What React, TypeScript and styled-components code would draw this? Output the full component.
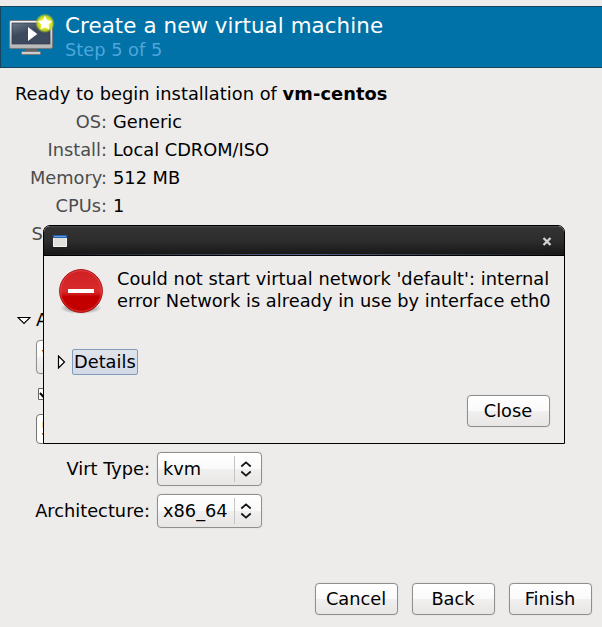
import React from 'react';
import styled, { createGlobalStyle } from 'styled-components';

const GlobalStyle = createGlobalStyle`
  * { box-sizing: border-box; }
  body { margin: 0; background: #edeceb; }
`;

const Window = styled.div`
  position: relative;
  width: 602px;
  height: 627px;
  padding-top: 6px;
  overflow: hidden;
  display: flex;
  flex-direction: column;
  background: #edeceb;
  color: #000;
  font: 17.8px/22px 'DejaVu Sans', sans-serif;
  white-space: nowrap;
`;

const Header = styled.header`
  height: 62px;
  flex: none;
  display: flex;
  padding: 6px 0 0 7px;
  background: #0072a8;
  border: 1px solid #14465e;
  border-right: 0;
`;

const HeaderText = styled.div`
  margin-left: 9px;
`;

const Title = styled.div`
  font-size: 21.4px;
  line-height: 26px;
  letter-spacing: 0.08px;
  color: #fff;
`;

const Step = styled.div`
  line-height: 22px;
  color: #4ea6dc;
`;

const Content = styled.main`
  flex: 1;
  padding: 12px 10px 0 15px;
`;

const Line = styled.div`
  height: 28px;
  line-height: 28px;
  letter-spacing: 0.04px;

  b { letter-spacing: 0.1px; }
`;

const Summary = styled.div`
  display: grid;
  grid-template-columns: 92px 1fr;
  grid-auto-rows: 28px;
  column-gap: 6px;
  line-height: 28px;
`;

const SummaryLabel = styled.span`
  color: #4c4c4c;
  text-align: right;
`;

const Advanced = styled.div`
  display: flex;
  align-items: center;
  gap: 5px;
  height: 28px;
  margin: 58px 0 6px 2px;
`;

const AdvancedOptions = styled.div`
  padding-left: 21px;
`;

const surface = `
  border: 1px solid #918f8d;
  border-radius: 4px;
  background: linear-gradient(#fff 0%, #fafafa 49%, #f1f0f0 51%, #e7e6e4 100%);
  box-shadow: 0 0 1px #b9b7b5;
`;

const Combo = styled.div<{ $width: number }>`
  ${surface}
  width: ${(p) => p.$width}px;
  height: 34px;
  display: flex;
  align-items: center;
  padding-left: 5px;
`;

const ComboArrows = styled.span`
  margin-left: auto;
  width: 27px;
  height: 26px;
  display: flex;
  align-items: center;
  padding-left: 5px;
  border-left: 1px solid #c7c5c3;
`;

const CheckRow = styled.div`
  height: 40px;
  display: flex;
  align-items: center;
  padding-left: 2px;
`;

const Entry = styled.div`
  width: 210px;
  height: 30px;
  padding-left: 4px;
  line-height: 28px;
  background: #fff;
  border: 1px solid #777573;
  border-radius: 4px;
`;

const Field = styled.div`
  display: grid;
  grid-template-columns: 135px auto;
  justify-content: start;
  align-items: center;
  column-gap: 7px;
  margin-top: 8px;
`;

const FieldLabel = styled.span`
  text-align: right;
`;

const Footer = styled.footer`
  display: flex;
  justify-content: flex-end;
  gap: 14px;
  padding: 0 10px 12px;
`;

const Button = styled.button`
  ${surface}
  width: 83px;
  height: 32px;
  padding: 0 1px 1px 0;
  font: inherit;
  color: #000;
`;

const Dialog = styled.section`
  position: absolute;
  left: 43px;
  top: 225px;
  width: 522px;
  height: 219px;
  display: flex;
  flex-direction: column;
  background: #edeceb;
  border: 1px solid #000;
  border-radius: 7px 7px 0 0;
  overflow: hidden;
`;

const TitleBar = styled.div`
  height: 30px;
  flex: none;
  display: flex;
  align-items: center;
  justify-content: space-between;
  padding: 1px 12px 0 9px;
  border-bottom: 1px solid #000;
  background:
    linear-gradient(90deg, #191919, #536991 50%, #191919) 0 100% / 100% 1px no-repeat,
    linear-gradient(#4b4b4b 0, #333 2px, #2d2d2d 50%, #171717 100%);
`;

const DialogMessage = styled.div`
  display: flex;
  gap: 13px;
  padding: 11px 0 0 14px;
`;

const MessageText = styled.div`
  padding-top: 1px;
  letter-spacing: 0.025px;
`;

const Details = styled.div`
  display: flex;
  align-items: center;
  gap: 6px;
  margin: 34px 0 0 13px;
`;

const DetailsLabel = styled.span`
  height: 26px;
  width: 66px;
  padding-left: 1px;
  line-height: 24px;
  border: 1px solid #829bbd;
  border-radius: 2px;
  background: linear-gradient(#e0e4ea, #d2dae7);
`;

const DialogActions = styled.div`
  display: flex;
  justify-content: flex-end;
  margin: auto 14px 16px 0;
`;

const MonitorIcon = () => (
  <svg width="48" height="44" viewBox="8 13 48 44">
    <defs>
      <linearGradient id="frame" x1="0" y1="0" x2="0" y2="1">
        <stop offset="0" stopColor="#f6f6f6" />
        <stop offset="1" stopColor="#b4b4b4" />
      </linearGradient>
      <linearGradient id="screen" x1="0" y1="0" x2="0.6" y2="1">
        <stop offset="0" stopColor="#6a7889" />
        <stop offset="0.5" stopColor="#3d495b" />
        <stop offset="1" stopColor="#3d4a60" />
      </linearGradient>
      <radialGradient id="glow">
        <stop offset="0.45" stopColor="#f3f01b" />
        <stop offset="0.75" stopColor="#c5d91c" stopOpacity="0.9" />
        <stop offset="1" stopColor="#6fb040" stopOpacity="0" />
      </radialGradient>
    </defs>
    <path d="M25 48H37V52H25Z" fill="#626262" />
    <rect x="21.5" y="51.5" width="19" height="3" rx="1" fill="#ccc" stroke="#777" />
    <rect x="9.5" y="20.5" width="43" height="28" rx="1.5" fill="url(#frame)" stroke="#777b7d" />
    <rect x="12" y="23" width="38" height="21" fill="url(#screen)" stroke="#2f394a" strokeWidth=".7" />
    <path d="M28 27L37.3 34L28 41Z" fill="#fff" />
    <circle cx="45" cy="23.3" r="10" fill="url(#glow)" />
    <path d="M45 16.3L47.1 20.6L51.8 21.2L48.4 24.5L49.2 29.2L45 27L40.8 29.2L41.6 24.5L38.2 21.2L42.9 20.6Z" fill="#fff" stroke="#fff" strokeWidth=".5" />
  </svg>
);

const ErrorIcon = () => (
  <svg width="46" height="48" viewBox="58 267 46 48">
    <defs>
      <radialGradient id="shadow">
        <stop offset="0.5" stopColor="#777" stopOpacity=".7" />
        <stop offset="1" stopColor="#777" stopOpacity="0" />
      </radialGradient>
      <linearGradient id="red" x1="0" y1="0" x2="0" y2="1">
        <stop offset="0" stopColor="#cf1f22" />
        <stop offset=".5" stopColor="#d82b2c" />
        <stop offset=".58" stopColor="#d01718" />
        <stop offset=".63" stopColor="#c20000" />
        <stop offset="1" stopColor="#c40000" />
      </linearGradient>
    </defs>
    <ellipse cx="81" cy="308" rx="21" ry="6" fill="url(#shadow)" />
    <circle cx="81" cy="291" r="21.4" fill="url(#red)" stroke="#af1010" />
    <circle cx="81" cy="291" r="20.3" fill="none" stroke="#e45b5b" strokeWidth=".8" opacity=".75" />
    <path d="M68 289H94V293H68Z" fill="#fff" />
  </svg>
);

const Arrows = () => (
  <svg width="12" height="16" viewBox="0 0 12 16" fill="none" stroke="#111" strokeWidth="1.7">
    <path d="M1.3 5.5L6 1.3L10.7 5.5M1.3 10.5L6 14.7L10.7 10.5" />
  </svg>
);

const Select = ({ value, width = 105 }: { value: string; width?: number }) => (
  <Combo $width={width}>
    {value}
    <ComboArrows><Arrows /></ComboArrows>
  </Combo>
);

const summary = [
  ['OS:', 'Generic'],
  ['Install:', 'Local CDROM/ISO'],
  ['Memory:', '512 MB'],
  ['CPUs:', '1'],
  ['Storage:', ''],
];

export default function App() {
  return (
    <>
      <GlobalStyle />
      <Window>
        <Header>
          <MonitorIcon />
          <HeaderText>
            <Title>Create a new virtual machine</Title>
            <Step>Step 5 of 5</Step>
          </HeaderText>
        </Header>
        <Content>
          <Line>Ready to begin installation of <b>vm-centos</b></Line>
          <Summary>
            {summary.map(([label, value]) => (
              <React.Fragment key={label}>
                <SummaryLabel>{label}</SummaryLabel>
                <span>{value}</span>
              </React.Fragment>
            ))}
          </Summary>
          <Advanced>
            <svg width="14" height="9" viewBox="0 0 14 9">
              <path d="M1 1.5H13L7 7.5Z" fill="#fff" stroke="#000" strokeWidth="1.2" />
            </svg>
            <span>Advanced options</span>
          </Advanced>
          <AdvancedOptions>
            <Select value="V" width={380} />
            <CheckRow>
              <svg width="12" height="12" viewBox="0 0 12 12">
                <path d="M.5.5H11.5V11.5H.5Z" fill="#fff" stroke="#666" />
                <path d="M2 5L5 8.5L10 2" fill="none" stroke="#000" strokeWidth="2" />
              </svg>
            </CheckRow>
            <Entry>5</Entry>
          </AdvancedOptions>
          <Field>
            <FieldLabel>Virt Type:</FieldLabel>
            <Select value="kvm" />
          </Field>
          <Field>
            <FieldLabel>Architecture:</FieldLabel>
            <Select value="x86_64" />
          </Field>
        </Content>
        <Footer>
          <Button>Cancel</Button>
          <Button>Back</Button>
          <Button>Finish</Button>
        </Footer>
        <Dialog>
          <TitleBar>
            <svg width="14" height="12" viewBox="0 0 14 12">
              <path d="M.5.5H13.5V11.5H.5Z" fill="#dfe1dd" stroke="#f5f5f3" />
              <path d="M0 0H14V3H0Z" fill="#2860b0" />
              <path d="M1 1H13V2H1Z" fill="#6399df" />
            </svg>
            <svg width="10" height="9" viewBox="0 0 10 9">
              <path d="M1.5 1L8.5 8M8.5 1L1.5 8" stroke="#d4d4d4" strokeWidth="2.3" />
            </svg>
          </TitleBar>
          <DialogMessage>
            <ErrorIcon />
            <MessageText>
              Could not start virtual network 'default': internal<br />
              error Network is already in use by interface eth0
            </MessageText>
          </DialogMessage>
          <Details>
            <svg width="9" height="14" viewBox="0 0 9 14">
              <path d="M1.5 1V13L7.5 7Z" fill="#fff" stroke="#000" strokeWidth="1.2" />
            </svg>
            <DetailsLabel>Details</DetailsLabel>
          </Details>
          <DialogActions><Button>Close</Button></DialogActions>
        </Dialog>
      </Window>
    </>
  );
}
